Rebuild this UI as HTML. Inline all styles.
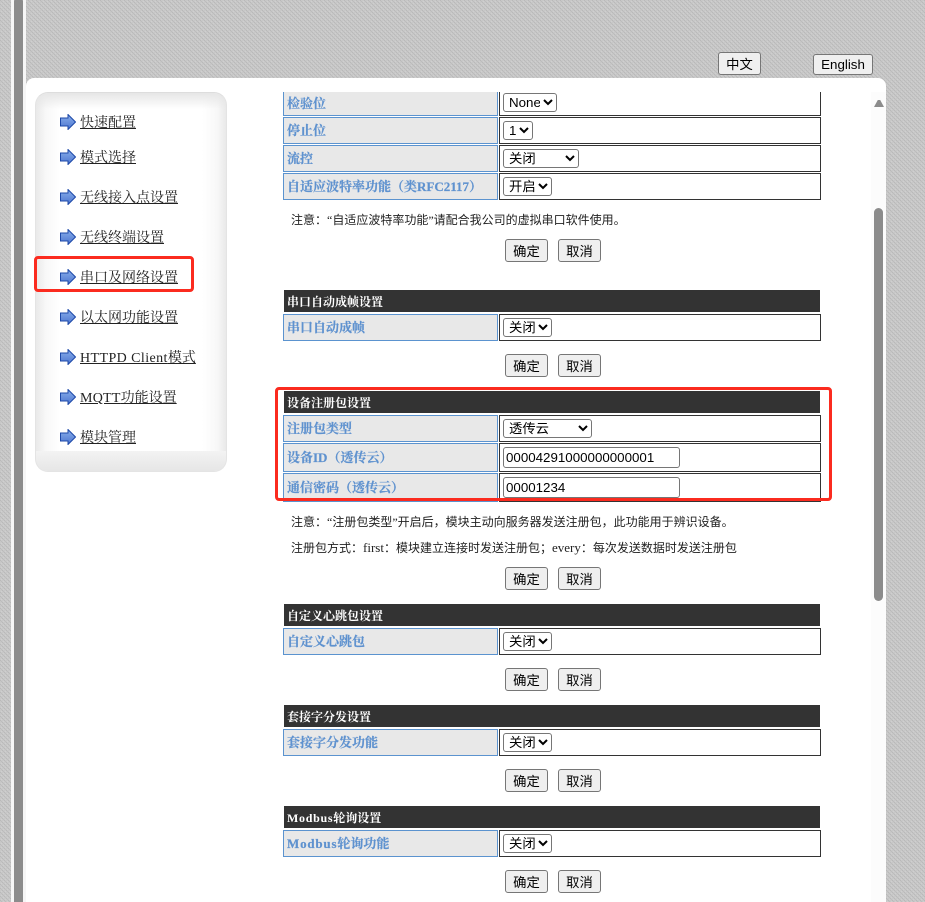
<!DOCTYPE html>
<html lang="zh"><head><meta charset="utf-8"><title>串口及网络设置</title>
<style>
*{box-sizing:border-box}
html,body{margin:0;padding:0;width:925px;height:902px;overflow:hidden;background:#fff}
body{position:relative;font-family:"Liberation Serif","Noto Serif CJK SC",serif;color:#222}
.a{position:absolute}
#bg{left:0;top:0;width:925px;height:902px}
#lt{left:11px;top:0;width:15px;height:902px;background:#f6f6f6}
#lb{left:14px;top:-3px;width:9px;height:920px;background:#8c8c8c;border-radius:5px}
#panel{left:26px;top:78px;width:860px;height:830px;background:#fff;border-radius:8px 8px 0 0}
#track{left:871px;top:92px;width:15px;height:810px;background:#fcfcfc}
#thumb{left:874px;top:208px;width:9px;height:393px;background:#8c8c8c;border-radius:5px}
#up{left:874px;top:100px;width:10px;height:7px;background:#8c8c8c;clip-path:polygon(38% 0,62% 0,100% 100%,0 100%)}
#nav{left:35px;top:92px;width:192px;height:380px;border-radius:13px;background:linear-gradient(90deg,#e9e9e9 0,#f8f8f8 10px,#fff 24px,#fff 166px,#f8f8f8 181px,#e9e9e9 100%);border:1px solid #e4e4e4;border-top-color:#ddd;overflow:hidden}
#nav:before{content:"";position:absolute;left:0;right:0;top:0;height:16px;background:linear-gradient(#e6e6e6,rgba(255,255,255,0))}
#nav:after{content:"";position:absolute;left:0;right:0;bottom:0;height:20px;background:linear-gradient(#f3f3f3,#e6e6e6)}
.n{position:absolute;left:80px;height:20px;line-height:20px;font-size:14px;color:#222;text-decoration:underline;white-space:nowrap}
.ar{position:absolute;left:60px;width:16px;height:16px}
.rb{position:absolute;border:3px solid #fb2b1f;border-radius:4px;z-index:5}
.h{position:absolute;left:284px;width:536px;height:22px;line-height:24px;background:#333;color:#fff;font-size:12px;font-weight:bold;padding-left:3px;white-space:nowrap}
.l{position:absolute;left:283px;width:215px;background:#e8e8e8;border:1px solid #5b93cf;color:#5f92cf;font-size:13px;font-weight:bold;padding-left:3px;white-space:nowrap;-webkit-text-stroke:.2px #5f92cf}
.v{position:absolute;left:499px;width:322px;border:1px solid #333;background:#fff;border-width:1px 1.5px 1.5px 1px}
select,input,button{position:absolute;font-family:"Liberation Sans","Noto Sans CJK SC",sans-serif;font-size:13.33px;color:#000}
select{left:503px;height:19px;padding:0 0 0 1px;background:#fff;border:1px solid #767676;border-radius:3px}
input{left:503px;width:177px;height:21px;padding:1px 2px;background:#fff;border:1px solid #767676;border-radius:3px}
button{height:23px;padding:0;background:#efefef;border:1px solid #767676;border-radius:3px;text-align:center}
.ok{left:505px;width:43px}.no{left:558px;width:43px}
.t{position:absolute;left:291px;font-size:12px;line-height:16px;color:#222;white-space:nowrap;font-family:"Liberation Serif","Noto Sans CJK SC",serif}
.t span{font-size:13px}
</style></head><body>
<svg class="a" id="bg" width="925" height="902"><defs><pattern id="p" width="4" height="4" patternUnits="userSpaceOnUse"><rect width="4" height="4" fill="#c7c7c7"/><rect x="0" y="0" width="1" height="1" fill="#b9b9b9"/><rect x="1" y="1" width="1" height="1" fill="#bdbdbd"/><rect x="2" y="2" width="1" height="1" fill="#b9b9b9"/><rect x="3" y="3" width="1" height="1" fill="#bdbdbd"/><rect x="3" y="1" width="1" height="1" fill="#cfcfcf"/><rect x="1" y="3" width="1" height="1" fill="#cfcfcf"/></pattern><linearGradient id="g" x1="0" y1="0" x2="0" y2="1"><stop offset="0" stop-color="#8aaeea"/><stop offset="1" stop-color="#4c76d0"/></linearGradient></defs><rect width="925" height="902" fill="url(#p)"/></svg>
<div class="a" id="lt"></div><div class="a" id="lb"></div>
<button style="left:718px;top:52px;width:43px">中文</button>
<button style="left:813px;top:54px;width:60px;height:21px">English</button>
<div class="a" id="panel"></div><div class="a" id="track"></div><div class="a" id="up"></div><div class="a" id="thumb"></div>
<div class="a" id="nav"></div>
<svg class="ar" style="top:114px" viewBox="0 0 16 16"><path d="M.5 4H8V.5L15.5 8 8 15.5V12H.5Z" fill="url(#g)" stroke="#1c48a8"/></svg>
<svg class="ar" style="top:149px" viewBox="0 0 16 16"><path d="M.5 4H8V.5L15.5 8 8 15.5V12H.5Z" fill="url(#g)" stroke="#1c48a8"/></svg>
<svg class="ar" style="top:189px" viewBox="0 0 16 16"><path d="M.5 4H8V.5L15.5 8 8 15.5V12H.5Z" fill="url(#g)" stroke="#1c48a8"/></svg>
<svg class="ar" style="top:229px" viewBox="0 0 16 16"><path d="M.5 4H8V.5L15.5 8 8 15.5V12H.5Z" fill="url(#g)" stroke="#1c48a8"/></svg>
<svg class="ar" style="top:269px" viewBox="0 0 16 16"><path d="M.5 4H8V.5L15.5 8 8 15.5V12H.5Z" fill="url(#g)" stroke="#1c48a8"/></svg>
<svg class="ar" style="top:309px" viewBox="0 0 16 16"><path d="M.5 4H8V.5L15.5 8 8 15.5V12H.5Z" fill="url(#g)" stroke="#1c48a8"/></svg>
<svg class="ar" style="top:349px" viewBox="0 0 16 16"><path d="M.5 4H8V.5L15.5 8 8 15.5V12H.5Z" fill="url(#g)" stroke="#1c48a8"/></svg>
<svg class="ar" style="top:389px" viewBox="0 0 16 16"><path d="M.5 4H8V.5L15.5 8 8 15.5V12H.5Z" fill="url(#g)" stroke="#1c48a8"/></svg>
<svg class="ar" style="top:429px" viewBox="0 0 16 16"><path d="M.5 4H8V.5L15.5 8 8 15.5V12H.5Z" fill="url(#g)" stroke="#1c48a8"/></svg>
<a class="n" style="top:114px">快速配置</a>
<a class="n" style="top:149px">模式选择</a>
<a class="n" style="top:189px">无线接入点设置</a>
<a class="n" style="top:229px">无线终端设置</a>
<a class="n" style="top:269px">串口及网络设置</a>
<a class="n" style="top:309px">以太网功能设置</a>
<a class="n" style="top:349px"><span style="letter-spacing:.42px">HTTPD Client</span>模式</a>
<a class="n" style="top:389px"><span style="letter-spacing:.25px">MQTT</span>功能设置</a>
<a class="n" style="top:429px">模块管理</a>
<div class="rb" style="left:34px;top:256px;width:160px;height:36px"></div>

<div class="l" style="top:84px;height:32px;line-height:37px;clip-path:inset(8px 0 0 0)">检验位</div>
<div class="v" style="top:84px;height:32px;clip-path:inset(8px 0 0 0)"></div>
<select style="top:93px;width:54px"><option>None</option></select>
<div class="l" style="top:117px;height:27px;line-height:26px">停止位</div><div class="v" style="top:117px;height:27px"></div>
<select style="top:121px;width:30px"><option>1</option></select>
<div class="l" style="top:145px;height:27px;line-height:25px">流控</div><div class="v" style="top:145px;height:27px"></div>
<select style="top:149px;width:76px"><option>关闭</option></select>
<div class="l" style="top:173px;height:27px;line-height:25px">自适应波特率功能（类RFC2117）</div><div class="v" style="top:173px;height:27px"></div>
<select style="top:177px;width:49px"><option>开启</option></select>
<div class="t" style="top:212px">注意：“自适应波特率功能”请配合我公司的虚拟串口软件使用。</div>
<button class="ok" style="top:239px">确定</button><button class="no" style="top:239px">取消</button>

<div class="h" style="top:290px">串口自动成帧设置</div>
<div class="l" style="top:314px;height:27px;line-height:25px">串口自动成帧</div><div class="v" style="top:314px;height:27px"></div>
<select style="top:318px;width:49px"><option>关闭</option></select>
<button class="ok" style="top:354px">确定</button><button class="no" style="top:354px">取消</button>

<div class="h" style="top:391px">设备注册包设置</div>
<div class="l" style="top:415px;height:27px;line-height:25px">注册包类型</div><div class="v" style="top:415px;height:27px"></div>
<select style="top:419px;width:89px"><option>透传云</option></select>
<div class="l" style="top:443px;height:29px;line-height:27px">设备ID（透传云）</div><div class="v" style="top:443px;height:29px"></div>
<input style="top:447px" value="00004291000000000001">
<div class="l" style="top:473px;height:29px;line-height:27px">通信密码（透传云）</div><div class="v" style="top:473px;height:29px"></div>
<input style="top:477px" value="00001234">
<div class="rb" style="left:275px;top:387px;width:557px;height:114px"></div>
<div class="t" style="top:514px">注意：“注册包类型”开启后，模块主动向服务器发送注册包，此功能用于辨识设备。</div>
<div class="t" style="top:540px">注册包方式：<span>first</span>：模块建立连接时发送注册包；<span>every</span>：每次发送数据时发送注册包</div>
<button class="ok" style="top:567px">确定</button><button class="no" style="top:567px">取消</button>

<div class="h" style="top:604px">自定义心跳包设置</div>
<div class="l" style="top:628px;height:27px;line-height:25px">自定义心跳包</div><div class="v" style="top:628px;height:27px"></div>
<select style="top:632px;width:49px"><option>关闭</option></select>
<button class="ok" style="top:668px">确定</button><button class="no" style="top:668px">取消</button>

<div class="h" style="top:705px">套接字分发设置</div>
<div class="l" style="top:729px;height:27px;line-height:25px">套接字分发功能</div><div class="v" style="top:729px;height:27px"></div>
<select style="top:733px;width:49px"><option>关闭</option></select>
<button class="ok" style="top:769px">确定</button><button class="no" style="top:769px">取消</button>

<div class="h" style="top:806px"><span style="letter-spacing:.7px">Modbus</span>轮询设置</div>
<div class="l" style="top:830px;height:27px;line-height:25px"><span style="letter-spacing:.8px">Modbus</span>轮询功能</div><div class="v" style="top:830px;height:27px"></div>
<select style="top:834px;width:49px"><option>关闭</option></select>
<button class="ok" style="top:870px">确定</button><button class="no" style="top:870px">取消</button>
</body></html>
